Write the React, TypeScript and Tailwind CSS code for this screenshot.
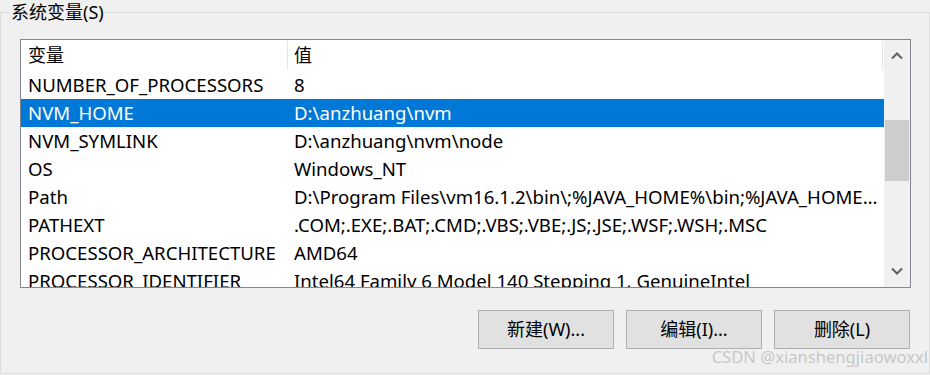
import React from "react"

const rows = [
  { name: "NUMBER_OF_PROCESSORS", value: "8" },
  { name: "NVM_HOME", value: "D:\\anzhuang\\nvm", selected: true },
  { name: "NVM_SYMLINK", value: "D:\\anzhuang\\nvm\\node" },
  { name: "OS", value: "Windows_NT" },
  { name: "Path", value: "D:\\Program Files\\vm16.1.2\\bin\\;%JAVA_HOME%\\bin;%JAVA_HOME%\\jre\\bin;" },
  { name: "PATHEXT", value: ".COM;.EXE;.BAT;.CMD;.VBS;.VBE;.JS;.JSE;.WSF;.WSH;.MSC" },
  { name: "PROCESSOR_ARCHITECTURE", value: "AMD64" },
  { name: "PROCESSOR_IDENTIFIER", value: "Intel64 Family 6 Model 140 Stepping 1, GenuineIntel" },
]

const Chevron = ({ down }: { down?: boolean }) => (
  <svg width="12" height="8" viewBox="0 0 12 8">
    <polyline
      points={down ? "1,1.5 6,6.5 11,1.5" : "1,6.5 6,1.5 11,6.5"}
      fill="none"
      stroke="#606060"
      strokeWidth="2"
    />
  </svg>
)

export default function App() {
  return (
    <div
      className="w-[930px] h-[375px] bg-[#f0f0f0] pt-[12px] text-black"
      style={{ fontFamily: '"Noto Sans", "Noto Sans CJK SC", sans-serif' }}
    >
      <div className="relative h-[362px] w-[930px] border border-[#dcdcdc]">
        <span className="absolute left-[9px] top-[-11px] px-[1px] bg-[#f0f0f0] text-[18px] leading-[20px]">
          系统变量(S)
        </span>

        {/* list view */}
        <div className="ml-[19px] mt-[26px] w-[891px] h-[249px] border border-[#828790] bg-white flex overflow-hidden">
          <div className="w-[863px] flex flex-col">
            <div className="flex h-[31px] shrink-0 text-[18px]">
              <div className="w-[266px] pl-[7px] flex items-center">变量</div>
              <div className="w-px h-[29px] mt-[1px] bg-[#e5e5e5]" />
              <div className="flex-1 pl-[6px] flex items-center">值</div>
              <div className="w-px h-[29px] mt-[1px] bg-[#e5e5e5]" />
              <div className="w-px" />
            </div>
            {rows.map((r) => (
              <div
                key={r.name}
                className={`flex h-[28px] shrink-0 items-center text-[18.6px] leading-[28px] ${
                  r.selected ? "bg-[#0078d7] text-white" : ""
                }`}
              >
                <div className="w-[266px] pl-[7px] whitespace-nowrap overflow-hidden">{r.name}</div>
                <div className="flex-1 min-w-0 pl-[7px] pr-[4px] truncate">{r.value}</div>
              </div>
            ))}
          </div>

          {/* scrollbar */}
          <div className="w-[26px] bg-[#f0f0f0] flex flex-col items-center">
            <div className="h-[31px] flex items-center justify-center pt-[1px]">
              <Chevron />
            </div>
            <div className="mt-[49px] w-[24px] h-[61px] bg-[#cdcdcd]" />
            <div className="flex-1" />
            <div className="h-[31px] flex items-center justify-center pb-[2px]">
              <Chevron down />
            </div>
          </div>
        </div>

        {/* buttons */}
        <div className="flex justify-end gap-[12px] pr-[19px] mt-[22px] text-[18px]">
          <button className="w-[136px] h-[39px] border border-[#adadad] bg-[#e1e1e1]">新建(W)...</button>
          <button className="w-[136px] h-[39px] border border-[#adadad] bg-[#e1e1e1]">编辑(I)...</button>
          <button className="w-[136px] h-[39px] border border-[#adadad] bg-[#e1e1e1]">删除(L)</button>
        </div>

        <span className="absolute right-[1px] bottom-[6px] text-[16.6px] leading-[20px] text-[#c8c8c8]">
          CSDN @xianshengjiaowoxxl
        </span>
      </div>
    </div>
  )
}
